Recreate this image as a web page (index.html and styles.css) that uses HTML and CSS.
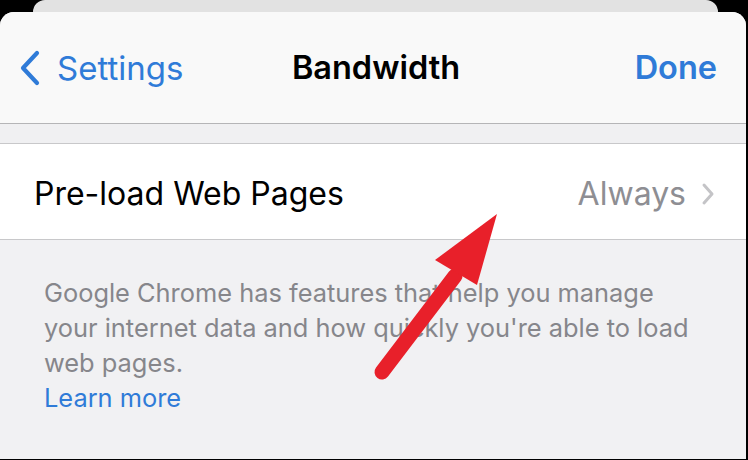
FILE: index.html
```html
<!DOCTYPE html>
<html>
<head>
<meta charset="utf-8">
<link rel="stylesheet" href="styles.css">
</head>
<body>
<div class="screen">
  <div class="stack-card"></div>
  <div class="sheet">
    <header class="nav">
      <div class="nav-back">
        <svg class="chev-back" width="22" height="36" viewBox="0 0 22 36"><path d="M18 3 L4 18 L18 33" fill="none" stroke="#2f7bd8" stroke-width="4.2" stroke-linecap="round" stroke-linejoin="round"/></svg>
        <span class="nav-back-label">Settings</span>
      </div>
      <div class="nav-title">Bandwidth</div>
      <div class="nav-done">Done</div>
    </header>
    <div class="spacer"></div>
    <div class="row">
      <span class="row-label">Pre-load Web Pages</span>
      <span class="row-value">Always</span>
      <svg class="chev" width="14" height="24" viewBox="0 0 14 24"><path d="M3 3 L11 12 L3 21" fill="none" stroke="#c4c4c7" stroke-width="3" stroke-linecap="round" stroke-linejoin="round"/></svg>
    </div>
    <div class="footer">
      <p class="footer-text">Google Chrome has features that help you manage your internet data and how quickly you're able to load web pages.</p>
      <a class="footer-link">Learn more</a>
    </div>
    <svg class="arrow" width="748" height="460" viewBox="0 0 748 460">
      <line x1="382" y1="372" x2="455" y2="276" stroke="#e8202a" stroke-width="15" stroke-linecap="round"/>
      <polygon points="497,214 435,260 477,285" fill="#e8202a"/>
    </svg>
  </div>
</div>
</body>
</html>
```

FILE: styles.css
```css
* { box-sizing: border-box; }
html, body { margin: 0; padding: 0; }
body {
  background: #000;
  width: 748px;
  height: 460px;
  overflow: hidden;
  font-family: Inter, Roboto, "Liberation Sans", sans-serif;
}
.screen {
  display: flex;
  flex-direction: column;
  height: 460px;
}
.stack-card {
  height: 12px;
  margin: 0 30px 0 33px;
  background: #e2e2e2;
  border-radius: 12px 12px 0 0;
  flex: none;
}
.sheet {
  flex: 1;
  margin: 0 2px 1px 0;
  background: #f1f1f3;
  border-radius: 14px 14px 0 0;
  overflow: hidden;
  display: flex;
  flex-direction: column;
}
.nav {
  height: 112px;
  flex: none;
  background: #f9f9f9;
  border-bottom: 1px solid #b5b5b7;
  display: flex;
  align-items: center;
  justify-content: space-between;
  padding: 0 29px 0 19px;
  position: relative;
}
.nav-back {
  display: flex;
  align-items: center;
  gap: 16px;
  color: #2f7bd8;
  font-size: 33px;
}
.chev-back { display: block; }
.nav-title {
  position: absolute;
  left: 0;
  right: 0;
  text-align: center;
  font-size: 32.5px;
  font-weight: 600;
  color: #000;
  pointer-events: none;
  padding-left: 6px;
}
.nav-done {
  color: #2f7bd8;
  font-size: 32.5px;
  font-weight: 600;
}
.spacer {
  height: 20px;
  flex: none;
  background: #f0f0f2;
  border-bottom: 1px solid #c8c8ca;
}
.row {
  height: 96px;
  flex: none;
  background: #fff;
  border-bottom: 1px solid #c8c8ca;
  display: flex;
  align-items: center;
  padding: 4px 31px 0 34px;
}
.row-label {
  flex: 1;
  font-size: 32px;
  color: #000;
}
.row-value {
  font-size: 32px;
  color: #8e8e93;
  margin-right: 15px;
}
.chev { display: block; }
.footer {
  padding: 35px 0 0 44px;
}
.footer-text {
  margin: 0;
  width: 662px;
  font-size: 25.4px;
  line-height: 35px;
  color: #86868b;
}
.footer-link {
  display: block;
  font-size: 25.4px;
  line-height: 35px;
  color: #2f7bd8;
}
.arrow {
  position: absolute;
  left: 0;
  top: 0;
  pointer-events: none;
}
```
